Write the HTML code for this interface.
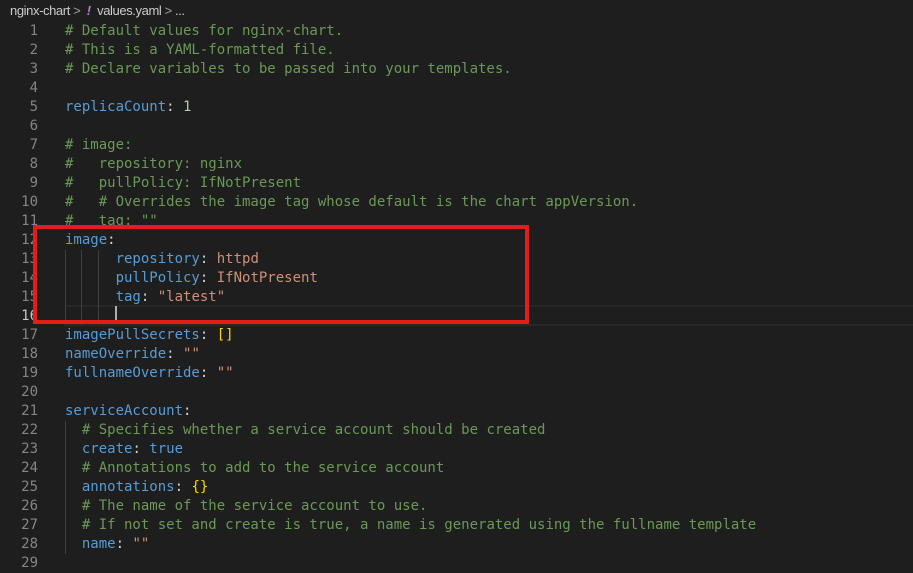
<!DOCTYPE html>
<html><head><style>
html,body{margin:0;padding:0;background:#1e1e1e;width:913px;height:570px;overflow:hidden}
.bc{position:absolute;left:10px;top:3px;font:13px "Liberation Sans",sans-serif;color:#cccccc;letter-spacing:-0.4px;white-space:pre}
.bc .ex{color:#b180d7;font-weight:bold;font-style:italic}
.bc .sep{color:#a0a0a0}
.ln{position:absolute;left:0;width:38px;top:22px;text-align:right;font:14px/19px "DejaVu Sans Mono",monospace;color:#858585;white-space:pre}
.code{position:absolute;left:65px;top:22px;font:14px/19px "DejaVu Sans Mono",monospace;color:#d4d4d4;white-space:pre}
.c{color:#6a9955}.k{color:#569cd6}.s{color:#ce9178}.n{color:#b5cea8}.b{color:#ffd700}
.hl{position:absolute;left:65px;right:0;top:305px;height:17px;border-top:2px solid #282828;border-bottom:2px solid #282828}
.g{position:absolute;width:1px;background:#404040}
.cur{position:absolute;left:115px;top:306px;width:2px;height:18px;background:#aeafad}
.red{position:absolute;left:33px;top:225px;width:488px;height:91px;border:4px solid #e31c1c}
</style></head><body>
<div class="bc">nginx-chart <span class="sep">&gt;</span>  <span class="ex">!</span>  values.yaml <span class="sep">&gt;</span> ...</div>
<div class="hl"></div>
<div class="ln">1
2
3
4
5
6
7
8
9
10
11
12
13
14
15
<span style="color:#c6c6c6">16</span>
17
18
19
20
21
22
23
24
25
26
27
28
29</div>
<div class="g" style="left:65px;top:250px;height:75px"></div>
<div class="g" style="left:81px;top:250px;height:75px"></div>
<div class="g" style="left:98px;top:250px;height:75px"></div>
<div class="g" style="left:65px;top:421px;height:133px"></div>
<div class="code"><span class="c"># Default values for nginx-chart.</span>
<span class="c"># This is a YAML-formatted file.</span>
<span class="c"># Declare variables to be passed into your templates.</span>

<span class="k">replicaCount</span>: <span class="n">1</span>

<span class="c"># image:</span>
<span class="c">#   repository: nginx</span>
<span class="c">#   pullPolicy: IfNotPresent</span>
<span class="c">#   # Overrides the image tag whose default is the chart appVersion.</span>
<span class="c">#   tag: ""</span>
<span class="k">image</span>:
      <span class="k">repository</span>: <span class="s">httpd</span>
      <span class="k">pullPolicy</span>: <span class="s">IfNotPresent</span>
      <span class="k">tag</span>: <span class="s">"latest"</span>

<span class="k">imagePullSecrets</span>: <span class="b">[]</span>
<span class="k">nameOverride</span>: <span class="s">""</span>
<span class="k">fullnameOverride</span>: <span class="s">""</span>

<span class="k">serviceAccount</span>:
  <span class="c"># Specifies whether a service account should be created</span>
  <span class="k">create</span>: <span class="k">true</span>
  <span class="c"># Annotations to add to the service account</span>
  <span class="k">annotations</span>: <span class="b">{}</span>
  <span class="c"># The name of the service account to use.</span>
  <span class="c"># If not set and create is true, a name is generated using the fullname template</span>
  <span class="k">name</span>: <span class="s">""</span>
</div>
<div class="cur"></div>
<div class="red"></div>
</body></html>
